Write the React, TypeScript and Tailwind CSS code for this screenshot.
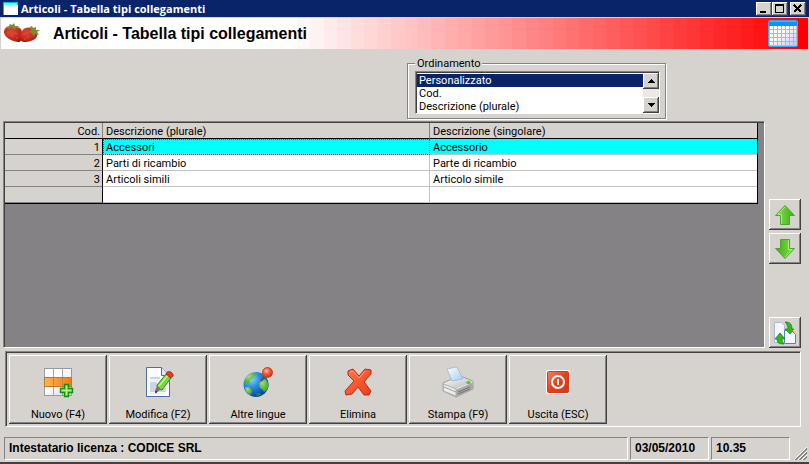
import { useState } from "react";
import type { ReactNode } from "react";
import { clsx } from "clsx";

const raised =
  "bg-[#d6d3ce] shadow-[inset_-1px_-1px_#424142,inset_1px_1px_#fff,inset_-2px_-2px_#848284]";
const sunken =
  "border border-t-[#848284] border-l-[#848284] border-r-white border-b-white";

const sortOptions = ["Personalizzato", "Cod.", "Descrizione (plurale)"];

const rows = [
  { cod: "1", plurale: "Accessori", singolare: "Accessorio" },
  { cod: "2", plurale: "Parti di ricambio", singolare: "Parte di ricambio" },
  { cod: "3", plurale: "Articoli simili", singolare: "Articolo simile" },
  { cod: "", plurale: "", singolare: "" },
];

const GRADIENT_STEPS = 39;

function WindowIcon() {
  return (
    <svg width="15" height="13" shapeRendering="crispEdges" aria-hidden>
      <rect width="15" height="13" fill="#00b8c8" />
      <rect x="1" y="1" width="13" height="2" fill="#5ff" />
      <rect x="1" y="3" width="14" height="10" fill="#fff" />
    </svg>
  );
}

function Strawberries() {
  return (
    <svg width="38" height="22" viewBox="0 0 38 22" aria-hidden>
      <defs>
        <radialGradient id="berry" cx="40%" cy="35%" r="75%">
          <stop offset="0" stopColor="#e2492f" />
          <stop offset="0.6" stopColor="#c42a1c" />
          <stop offset="1" stopColor="#8f1a12" />
        </radialGradient>
      </defs>
      <path d="M1 9C1 4 5 3 10 4c5-1 9 1 9 6 0 6-1 10-4 9C8 18 1 14 1 9z" fill="url(#berry)" />
      <path d="M19 8c2-4 7-4 11-3 4 1 5 4 4 8-1 4-8 6-13 6-3 0-4-3-4-6 0-2 1-4 2-5z" fill="url(#berry)" />
      <path d="M3 4l3-1 1-2 2 1 2-2 1 3 3 0 2 3-4-1-2 2-2-3-3 2-3-1z" fill="#7d8a3a" />
      <path d="M27 4l2-1 1 2 3-1 0 3 4 0-3 2 2 3-4-1-1 3-2-4-3-1 2-2z" fill="#7b8c34" />
      <g fill="#ef8263">
        <circle cx="5" cy="10" r=".6" />
        <circle cx="9" cy="12" r=".6" />
        <circle cx="13" cy="10" r=".6" />
        <circle cx="14" cy="15" r=".6" />
        <circle cx="21" cy="11" r=".6" />
        <circle cx="25" cy="14" r=".6" />
        <circle cx="22" cy="16" r=".6" />
      </g>
    </svg>
  );
}

function CalendarIcon() {
  return (
    <svg width="30" height="27" viewBox="0 0 30 27" aria-hidden>
      <defs>
        <linearGradient id="cal" x1="0" y1="0" x2="1" y2="1">
          <stop offset="0.4" stopColor="#fff" />
          <stop offset="1" stopColor="#c6c6f4" />
        </linearGradient>
      </defs>
      <rect x="0.5" y="0.5" width="29" height="26" rx="1.5" fill="#bdbdd0" stroke="#35a8f0" />
      <rect x="1" y="1" width="28" height="5" fill="#0b93f5" />
      <rect x="2" y="1" width="26" height="1" fill="#35b6ff" />
      <rect x="2" y="6" width="26" height="19" fill="url(#cal)" />
      <path
        d="M5.5 6v19M9.5 6v19M13.5 6v19M17.5 6v19M21.5 6v19M25.5 6v19M2 9.5h26M2 13.5h26M2 17.5h26M2 21.5h26"
        stroke="#b5b3c6"
      />
    </svg>
  );
}

function NewRowIcon() {
  return (
    <svg width="32" height="32" viewBox="0 0 32 32" aria-hidden>
      <defs>
        <linearGradient id="orange" x1="0" y1="0" x2="1" y2="0">
          <stop offset="0" stopColor="#fdb453" />
          <stop offset="1" stopColor="#ee7d0c" />
        </linearGradient>
        <linearGradient id="cell" x1="0" y1="0" x2="1" y2="1">
          <stop offset="0.4" stopColor="#fff" />
          <stop offset="1" stopColor="#d4d4f2" />
        </linearGradient>
      </defs>
      <rect x="2.5" y="2.5" width="27" height="27" fill="url(#cell)" stroke="#9a9a9e" />
      <path d="M11.5 3v26M20.5 3v26" stroke="#a5a5aa" />
      <rect x="2.5" y="11.5" width="27" height="9" fill="url(#orange)" stroke="#bf7a25" />
      <path d="M11.5 12v8M20.5 12v8" stroke="#cf8630" />
      <path d="M22.5 18.5h4v4h4v4h-4v4h-4v-4h-4v-4h4z" fill="#8be04c" stroke="#159015" strokeWidth="1.4" />
      <path d="M24.5 20v9M20 24.5h9" stroke="#b8f284" />
    </svg>
  );
}

function EditIcon() {
  return (
    <svg width="32" height="32" viewBox="0 0 32 32" aria-hidden>
      <path d="M4.500 1.500h15l8 8v21h-23z" fill="#fdfdff" stroke="#4d6fa5" />
      <path d="M19.500 1.500v8h8" fill="#dfe9f7" stroke="#4d6fa5" />
      <path d="M8 11h10v2H8zM8 16h7v10H8zM17 22h7v4h-7z" fill="#ccd3e2" />
      <path d="M8 14.500h9M8 27.500h16" stroke="#e4e8f0" />
      <path d="M15 19L24 8l5 4-9 12-4-1z" fill="#7bd43a" stroke="#2c8b1c" />
      <path d="M17 20l9-11" stroke="#c4f593" strokeWidth="1.500" />
      <path d="M14 27l-1-2 2-5 3 2-1 3z" fill="#77736a" />
      <path d="M13 27.500l.5-3 2 1.500z" fill="#333" />
      <path d="M24 8c1-3 4-3 6-1s1 4-1 5z" fill="#e33b25" stroke="#b32818" />
    </svg>
  );
}

function GlobeIcon() {
  return (
    <svg width="32" height="32" viewBox="0 0 32 32" aria-hidden>
      <defs>
        <radialGradient id="sea" cx="32%" cy="28%" r="75%">
          <stop offset="0" stopColor="#8fd4fb" />
          <stop offset="0.45" stopColor="#278ddd" />
          <stop offset="1" stopColor="#0b3f99" />
        </radialGradient>
        <radialGradient id="land" cx="35%" cy="30%" r="75%">
          <stop offset="0" stopColor="#9be26a" />
          <stop offset="1" stopColor="#3f9c2c" />
        </radialGradient>
        <radialGradient id="pin" cx="40%" cy="35%" r="65%">
          <stop offset="0" stopColor="#ffc0a0" />
          <stop offset="0.5" stopColor="#ee5b35" />
          <stop offset="1" stopColor="#c5351a" />
        </radialGradient>
      </defs>
      <circle cx="14" cy="18.500" r="12.500" fill="url(#sea)" />
      <path d="M4 12c2-3 5-5 9-5l2 1-3 2-1 3-3 1-1 3-3 0-2 1c0-2 1-4 2-6z" fill="url(#land)" />
      <path d="M3 21l4 0 3 3 0 3-2 2c-3-2-5-4-5-8z" fill="url(#land)" />
      <path d="M19 15l4-2 2 2c2 3 2 6 0 9l-3 2-2-3-2-1-1-4z" fill="url(#land)" />
      <path d="M14 28l4-1 1 2-4 1z" fill="#348c2c" />
      <path d="M19 15l6-7" stroke="#555" strokeWidth="2" />
      <circle cx="25.500" cy="6.500" r="5" fill="url(#pin)" stroke="#c94526" />
    </svg>
  );
}

function DeleteIcon() {
  return (
    <svg width="32" height="32" viewBox="0 0 32 32" aria-hidden>
      <defs>
        <linearGradient id="cross" x1="0" y1="0" x2="1" y2="1">
          <stop offset="0" stopColor="#ff7b4a" />
          <stop offset="1" stopColor="#ee3a1b" />
        </linearGradient>
      </defs>
      <path
        d="M6 5l5-2 6 7 6-7 6 1v4l-7 8 7 9-2 4-5 0-6-8-6 7-6 1-1-4 9-10-6-6z"
        fill="url(#cross)"
        stroke="#b92b16"
        strokeLinejoin="round"
      />
      <path d="M8 6l3-1 6 7 6-7" fill="none" stroke="#ff9d74" />
    </svg>
  );
}

function PrinterIcon() {
  return (
    <svg width="32" height="32" viewBox="0 0 32 32" aria-hidden>
      <defs>
        <linearGradient id="sheet" x1="0" y1="0" x2="1" y2="1">
          <stop offset="0" stopColor="#fff" />
          <stop offset="1" stopColor="#9fcdf4" />
        </linearGradient>
        <linearGradient id="lid" x1="0" y1="0" x2="1" y2="1">
          <stop offset="0" stopColor="#fff" />
          <stop offset="1" stopColor="#b3b3b3" />
        </linearGradient>
      </defs>
      <path d="M1 17l11-5 9-1 10 4v8l-17 8-13-6z" fill="#c4c4c4" stroke="#a0a0a0" />
      <path d="M1.500 17.500l12-5.500 7-.5 10 4-16.500 7z" fill="url(#lid)" />
      <path d="M1.500 18l12.500 5v7l-12.500-5z" fill="#ececec" stroke="#b4b4b4" />
      <path d="M2 21l12 5" stroke="#9f9f9f" />
      <path d="M14 23l17-7v7l-17 7z" fill="#a9a9a9" />
      <path d="M16 26l12-5M16 28l12-5" stroke="#737373" />
      <path d="M14.500 23l16-7" stroke="#ededed" />
      <path d="M5 3l9-2 2 2 5 10-11 2z" fill="url(#sheet)" stroke="#a9bfd4" />
      <ellipse cx="26.500" cy="16.500" rx="2.200" ry="1.500" fill="#43cc36" />
    </svg>
  );
}

function ExitIcon() {
  return (
    <svg width="32" height="32" viewBox="0 0 32 32" aria-hidden>
      <defs>
        <linearGradient id="power" x1="0" y1="0" x2="1" y2="1">
          <stop offset="0" stopColor="#f58361" />
          <stop offset="0.5" stopColor="#e5401d" />
          <stop offset="1" stopColor="#d93713" />
        </linearGradient>
      </defs>
      <rect x="4" y="4" width="24" height="24" rx="2" fill="#fff" />
      <rect x="5.500" y="5.500" width="21" height="21" rx="1" fill="url(#power)" stroke="#cf3d1c" />
      <circle cx="16" cy="16" r="6" fill="none" stroke="#fff" strokeWidth="2" />
      <path d="M16 13v6" stroke="#fff" strokeWidth="2" />
    </svg>
  );
}

function ArrowIcon({ down = false }: { down?: boolean }) {
  return (
    <svg width="22" height="22" viewBox="0 0 22 22" className={clsx(down && "rotate-180")} aria-hidden>
      <defs>
        <linearGradient id="green" x1="0" y1="0" x2="1" y2="0">
          <stop offset="0" stopColor="#8be254" />
          <stop offset="1" stopColor="#3aae10" />
        </linearGradient>
      </defs>
      <path d="M11 1.500L20.500 11.500H15.500V20.500H6.500V11.500H1.500z" fill="url(#green)" stroke="#4fa336" />
      <path d="M11 3L4 10.500H7.500V19.500" fill="none" stroke="#aaf07c" />
    </svg>
  );
}

function RefreshIcon() {
  return (
    <svg width="24" height="24" viewBox="0 0 24 24" aria-hidden>
      <path d="M1.500 1.500h7l3 3v17h-10z" fill="#f5f8ff" stroke="#a9bbdb" />
      <path d="M11.500 9.500h7l4 4v9h-11z" fill="#f5f8ff" stroke="#5b82b8" />
      <path d="M12 1c5 0 7 2 7 7h2l-4 5-5-5h3c0-3-1-5-3-7z" fill="#35b51e" stroke="#147a12" strokeWidth=".7" />
      <path d="M11 23c-5 0-7-1-7-5H2l5-6 5 6H9c0 2 1 4 2 5z" fill="#35b51e" stroke="#147a12" strokeWidth=".7" />
      <path d="M20 9l2 2" stroke="#f5d23a" strokeWidth="1.500" />
    </svg>
  );
}

function ScrollArrow({ down = false }: { down?: boolean }) {
  return (
    <svg width="7" height="4" shapeRendering="crispEdges" className={clsx(down && "rotate-180")} aria-hidden>
      <path d="M3 0h1v1h1v1h1v1h1v1H0V3h1V2h1V1h1z" />
    </svg>
  );
}

function CaptionButton({ label, children }: { label: string; children: ReactNode }) {
  return (
    <button type="button" aria-label={label} className={clsx("flex h-[14px] w-4 items-center justify-center", raised)}>
      <svg width="10" height="9" shapeRendering="crispEdges" fill="none" stroke="#000" aria-hidden>
        {children}
      </svg>
    </button>
  );
}

function SideButton({ label, children }: { label: string; children: ReactNode }) {
  return (
    <button type="button" aria-label={label} className={clsx("flex h-[31px] w-8 items-center justify-center", raised)}>
      {children}
    </button>
  );
}

const actions = [
  { label: "Nuovo (F4)", icon: <NewRowIcon /> },
  { label: "Modifica (F2)", icon: <EditIcon /> },
  { label: "Altre lingue", icon: <GlobeIcon /> },
  { label: "Elimina", icon: <DeleteIcon /> },
  { label: "Stampa (F9)", icon: <PrinterIcon /> },
  { label: "Uscita (ESC)", icon: <ExitIcon /> },
];

export default function App() {
  const [sort, setSort] = useState(sortOptions[0]);

  return (
    <div className="relative flex min-h-screen flex-col border-b-2 border-[#424142] bg-[#d6d3ce] font-[Roboto,Arial,sans-serif] text-[11px] leading-[13px] text-black">
      <header>
        <div className="flex h-[17px] items-center bg-[#0a246a] px-[3px] text-white">
          <WindowIcon />
          <span className="ml-[3px] flex-1 font-['Open_Sans',sans-serif] font-bold">
            Articoli - Tabella tipi collegamenti
          </span>
          <CaptionButton label="Riduci a icona">
            <path d="M1 8h6" strokeWidth="2" />
          </CaptionButton>
          <CaptionButton label="Ingrandisci">
            <path d="M0.500 0v9M8.500 0v9M0 8.500h9" />
            <path d="M0 1h9" strokeWidth="2" />
          </CaptionButton>
          <span className="w-[2px]" />
          <CaptionButton label="Chiudi">
            <path d="M1 1l7 7M8 1l-7 7" strokeWidth="1.500" />
          </CaptionButton>
        </div>

        <div className="relative mx-px mt-px flex h-[31px] items-center bg-white pr-[10px] pl-[2px]">
          <div className="absolute inset-0 flex pl-[35%]" aria-hidden>
            {Array.from({ length: GRADIENT_STEPS }, (_, i) => {
              const c = Math.round(255 * (1 - i / (GRADIENT_STEPS - 1)));
              return <span key={i} className="flex-1" style={{ backgroundColor: `rgb(255, ${c}, ${c})` }} />;
            })}
          </div>
          <div className="relative flex flex-1 items-center">
            <Strawberries />
            <h1 className="ml-3 flex-1 font-['Liberation_Sans',Arial,sans-serif] text-[16px] leading-5 font-bold">
              Articoli - Tabella tipi collegamenti
            </h1>
            <CalendarIcon />
          </div>
        </div>
      </header>

      <div className="flex justify-end pt-2 pr-[143px]">
        <fieldset className="w-[259px] border border-[#848284] pr-[5px] pb-1 pl-[7px] shadow-[1px_1px_#fff,inset_1px_1px_#fff]">
          <legend className="bg-[#d6d3ce] px-[2px]">
            <label htmlFor="ordinamento">Ordinamento</label>
          </legend>
          <div className={clsx("mt-px flex", sunken)}>
            <div className="flex h-[41px] flex-1 border-t border-l border-[#424142] bg-white">
              <select
                id="ordinamento"
                size={3}
                value={sort}
                onChange={(e) => setSort(e.target.value)}
                className="h-10 flex-1 appearance-none overflow-hidden pt-px outline-none"
              >
                {sortOptions.map((o) => (
                  <option
                    key={o}
                    className="h-[13px] min-h-0 px-[2px] py-0 leading-[13px] checked:bg-[linear-gradient(#0a246a,#0a246a)] checked:[-webkit-text-fill-color:white]"
                  >
                    {o}
                  </option>
                ))}
              </select>
              <div className="flex w-4 flex-col justify-between bg-[#ebe9e6]">
                <button type="button" aria-label="Su" className={clsx("flex h-4 items-center justify-center", raised)}>
                  <ScrollArrow />
                </button>
                <button type="button" aria-label="Giù" className={clsx("flex h-4 items-center justify-center", raised)}>
                  <ScrollArrow down />
                </button>
              </div>
            </div>
          </div>
        </fieldset>
      </div>

      <main className="mt-[2px] flex flex-1 pl-[3px]">
        <div className={clsx("flex-1", sunken)}>
          <div className="h-full border-t border-l border-[#424142] bg-[#848284] pr-[6px]">
            <table className="w-full table-fixed border-separate border-spacing-0 border-r border-b border-black">
              <colgroup>
                <col className="w-[98px]" />
                <col />
                <col />
              </colgroup>
              <thead>
                <tr className="h-4 bg-[#d6d3ce]">
                  <th className="border-r border-b border-r-[#848284] border-b-black p-0 pt-px pr-[2px] text-right font-normal">Cod.</th>
                  <th className="border-r border-b border-r-[#848284] border-b-black p-0 pt-px pl-[3px] text-left font-normal">
                    Descrizione (plurale)
                  </th>
                  <th className="border-b border-black p-0 pt-px pl-[3px] text-left font-normal">Descrizione (singolare)</th>
                </tr>
              </thead>
              <tbody>
                {rows.map((row, i) => (
                  <tr key={i} className={clsx("h-4", i === 0 ? "bg-[#0ff]" : "bg-white")}>
                    <td className="border-r border-b border-r-black border-b-[#848284] bg-[#d6d3ce] p-0 pt-px pr-[2px] text-right">
                      {row.cod}
                    </td>
                    <td
                      className={clsx(
                        "border-r border-b border-[#c6c3c6] p-0 pt-px pl-[3px]",
                        i === 0 && "outline-1 -outline-offset-1 outline-dotted outline-[#e02020]",
                      )}
                    >
                      {row.plurale}
                    </td>
                    <td className="border-b border-[#c6c3c6] p-0 pt-px pl-[3px]">{row.singolare}</td>
                  </tr>
                ))}
              </tbody>
            </table>
          </div>
        </div>
        <div className="flex w-11 flex-col items-start justify-end gap-[3px] pl-1">
          <SideButton label="Sposta su">
            <ArrowIcon />
          </SideButton>
          <SideButton label="Sposta giù">
            <ArrowIcon down />
          </SideButton>
          <div className="mt-[50px]">
            <SideButton label="Aggiorna">
              <RefreshIcon />
            </SideButton>
          </div>
        </div>
      </main>

      <div className={clsx("mt-[3px] mr-2 ml-[5px]", sunken)}>
        <div className="flex gap-[2px] border-t border-l border-[#424142] p-[2px]">
          {actions.map((a) => (
            <button
              key={a.label}
              type="button"
              className={clsx("flex h-[69px] w-[98px] flex-col items-center gap-[10px] pt-[11px]", raised)}
            >
              {a.icon}
              <span>{a.label}</span>
            </button>
          ))}
        </div>
      </div>

      <footer className="mt-[10px] mb-[2px] flex gap-[2px] pr-[19px] pl-1 font-['Liberation_Sans',Arial,sans-serif] text-[12px] font-bold">
        <div className={clsx("flex-1 px-1 py-1", sunken)}>Intestatario licenza : CODICE SRL</div>
        <div className={clsx("w-[79px] px-1 py-1", sunken)}>03/05/2010</div>
        <div className={clsx("w-[79px] px-1 py-1", sunken)}>10.35</div>
        <svg width="13" height="13" className="absolute right-[2px] bottom-[2px]" aria-hidden>
          <path d="M0 13L13 0M4 13l9-9M8 13l5-5" stroke="#fff" />
          <path d="M1 13L13 1M2 13L13 2M5 13l8-8M6 13l7-7M9 13l4-4M10 13l3-3" stroke="#848284" />
        </svg>
      </footer>
    </div>
  );
}
